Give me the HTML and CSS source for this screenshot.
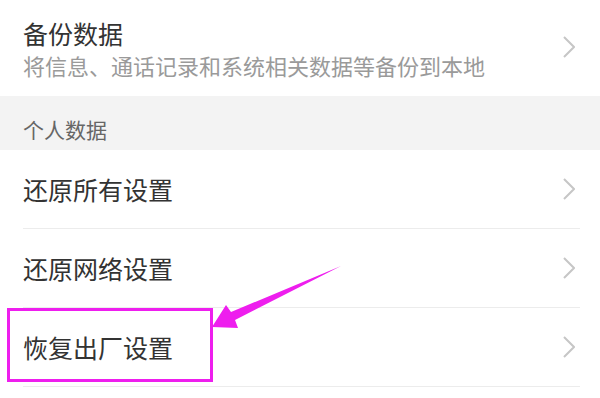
FILE: index.html
```html
<!DOCTYPE html>
<html lang="zh">
<head>
<meta charset="utf-8">
<link rel="stylesheet" href="styles.css">
</head>
<body>
<div class="page">
  <div class="item-top">
    <div class="texts">
      <div class="title">备份数据</div>
      <div class="sub">将信息、通话记录和系统相关数据等备份到本地</div>
    </div>
    <svg class="chev" viewBox="0 0 12 22" width="12" height="22"><polyline points="1,1 11,11 1,21"/></svg>
  </div>
  <div class="section">个人数据</div>
  <div class="list">
    <div class="row"><span class="label">还原所有设置</span><svg class="chev" viewBox="0 0 12 22" width="12" height="22"><polyline points="1,1 11,11 1,21"/></svg></div>
    <div class="row"><span class="label">还原网络设置</span><svg class="chev" viewBox="0 0 12 22" width="12" height="22"><polyline points="1,1 11,11 1,21"/></svg></div>
    <div class="row"><span class="label">恢复出厂设置</span><svg class="chev" viewBox="0 0 12 22" width="12" height="22"><polyline points="1,1 11,11 1,21"/></svg></div>
  </div>
  <svg class="annot" viewBox="0 0 600 398" width="600" height="398">
    <rect x="8.5" y="309.5" width="203" height="71" fill="none" stroke="#ee1eee" stroke-width="3"/>
    <polygon points="212,327 226,305 231,312 341,266 235,320 238,328" fill="#ee1eee"/>
  </svg>
</div>
</body>
</html>
```
FILE: styles.css
```css
html, body {
  margin: 0;
  padding: 0;
  background: #fff;
}
.page {
  position: relative;
  width: 600px;
  height: 398px;
  overflow: hidden;
  font-family: "Noto Sans CJK SC", "Noto Sans", sans-serif;
  background: #fff;
}
.item-top {
  height: 96px;
  box-sizing: border-box;
  padding: 17px 25px 0 23px;
  display: flex;
  justify-content: space-between;
  align-items: flex-start;
}
.item-top .chev {
  margin-top: 19px;
}
.title {
  font-size: 25px;
  line-height: 32px;
  color: #333;
}
.sub {
  font-size: 22px;
  line-height: 32px;
  color: #9a9a9a;
}
.section {
  height: 54px;
  box-sizing: border-box;
  padding: 18px 0 0 23px;
  background: #f3f3f3;
  font-size: 21px;
  line-height: 30px;
  color: #666;
}
.row {
  height: 79px;
  box-sizing: border-box;
  margin: 0 20px 0 23px;
  padding-right: 5px;
  border-bottom: 1px solid #ececec;
  display: flex;
  align-items: center;
  justify-content: space-between;
}
.label {
  font-size: 25px;
  line-height: 32px;
  color: #333;
}
.chev {
  display: block;
  flex: none;
}
.chev polyline {
  fill: none;
  stroke: #c6c6c6;
  stroke-width: 2;
}
.annot {
  position: absolute;
  left: 0;
  top: 0;
  pointer-events: none;
}
```
